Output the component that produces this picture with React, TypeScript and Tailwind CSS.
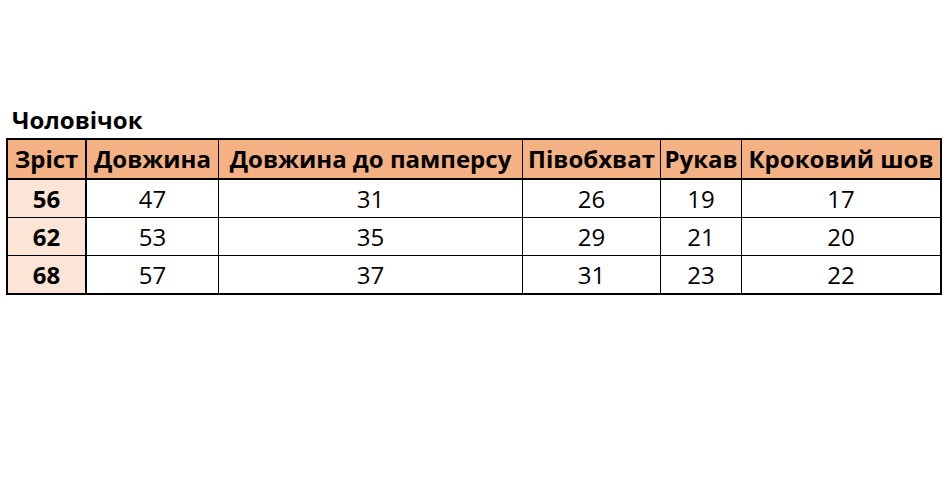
const columns = [
  { title: "Зріст", width: "w-[79px]" },
  { title: "Довжина", width: "w-[132px]" },
  { title: "Довжина до памперсу", width: "w-[304px]" },
  { title: "Півобхват", width: "w-[138px]" },
  { title: "Рукав", width: "w-[81px]" },
  { title: "Кроковий шов", width: "w-[198px]" },
]

const rows = [
  ["56", "47", "31", "26", "19", "17"],
  ["62", "53", "35", "29", "21", "20"],
  ["68", "57", "37", "31", "23", "22"],
]

export default function App() {
  return (
    <div className="w-[947px] h-[481px] bg-white font-[family-name:'Open_Sans',sans-serif] text-black">
      <div className="pt-[104px] pl-[12px] mb-[2px] text-[24px] font-bold leading-[32px]">Чоловічок</div>

      <div className="ml-[6px] w-[936px] border-2 border-black">
        <div className="flex h-[40px] bg-[#f4b183] border-b-2 border-black">
          {columns.map((col, i) => (
            <div
              key={col.title}
              className={`${col.width} flex items-center justify-center text-[24px] font-bold whitespace-nowrap border-black ${
                i === 0 ? "border-r-2" : i < columns.length - 1 ? "border-r" : ""
              }`}
            >
              {col.title}
            </div>
          ))}
        </div>

        {rows.map((row, r) => (
          <div
            key={row[0]}
            className={`flex border-black ${r < rows.length - 1 ? "h-[38px] border-b" : "h-[37px]"}`}
          >
            {row.map((cell, i) => (
              <div
                key={i}
                className={`${columns[i].width} flex items-center justify-center text-[24px] border-black ${
                  i === 0 ? "border-r-2 bg-[#fce4d6] font-bold" : i < row.length - 1 ? "border-r" : ""
                }`}
              >
                {cell}
              </div>
            ))}
          </div>
        ))}
      </div>
    </div>
  )
}
